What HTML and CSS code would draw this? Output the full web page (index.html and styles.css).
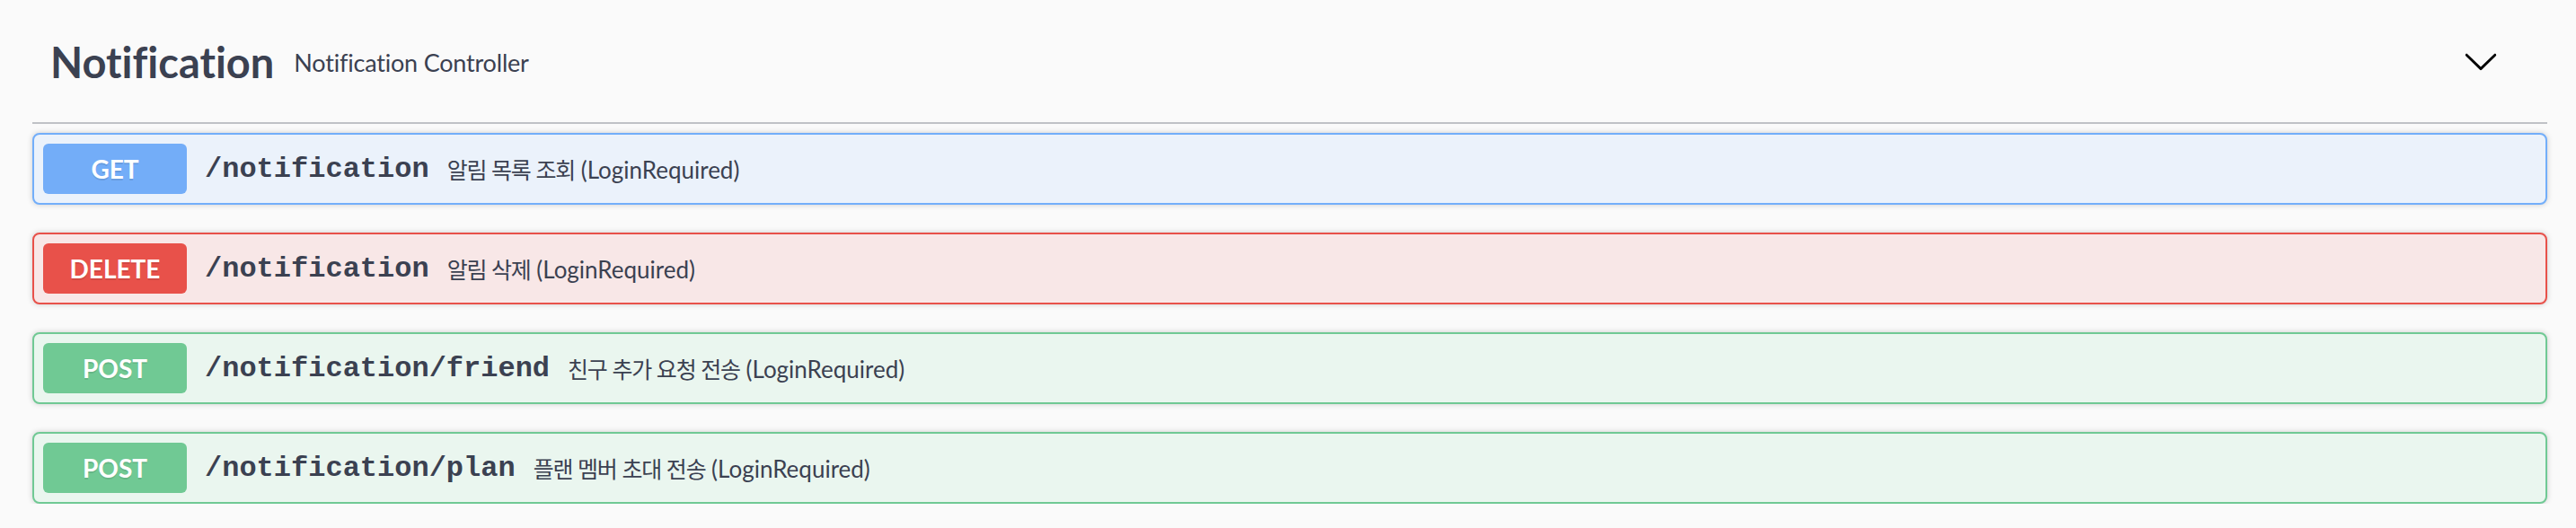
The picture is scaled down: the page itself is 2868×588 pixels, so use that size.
FILE: index.html
```html
<!DOCTYPE html>
<html lang="ko">
<head>
<meta charset="utf-8">
<title>Notification</title>
<link rel="stylesheet" href="styles.css">
</head>
<body>
<div class="wrapper">
  <section class="tag-section">
    <h3 class="opblock-tag">
      <span class="tag-name">Notification</span>
      <small class="tag-desc">Notification Controller</small>
      <button class="expand" aria-label="collapse">
        <svg class="arrow" width="40" height="40" viewBox="0 0 20 20"><path d="M17.418 6.109c.272-.268.709-.268.979 0s.271.701 0 .969l-7.908 7.83c-.27.268-.707.268-.979 0l-7.908-7.83c-.27-.268-.27-.701 0-.969.271-.268.709-.268.979 0L10 13.25l7.418-7.141z"/></svg>
      </button>
    </h3>
    <div class="ops">
      <div class="opblock get">
        <span class="method">GET</span>
        <span class="path">/notification</span>
        <span class="desc"><span class="ko">알림 목록 조회</span> (LoginRequired)</span>
      </div>
      <div class="opblock delete">
        <span class="method">DELETE</span>
        <span class="path">/notification</span>
        <span class="desc"><span class="ko">알림 삭제</span> (LoginRequired)</span>
      </div>
      <div class="opblock post">
        <span class="method">POST</span>
        <span class="path">/notification/friend</span>
        <span class="desc"><span class="ko">친구 추가 요청 전송</span> (LoginRequired)</span>
      </div>
      <div class="opblock post">
        <span class="method">POST</span>
        <span class="path">/notification/plan</span>
        <span class="desc"><span class="ko">플랜 멤버 초대 전송</span> (LoginRequired)</span>
      </div>
    </div>
  </section>
</div>
</body>
</html>
```

FILE: styles.css
```css
html, body {
  margin: 0;
  padding: 0;
  background: #fafafa;
}

body {
  font-family: Lato, "Noto Sans CJK KR", sans-serif;
  font-variant-ligatures: none;
  color: #3b4151;
}

.wrapper {
  padding: 0 32px 0 36px;
}

.opblock-tag {
  display: flex;
  align-items: center;
  margin: 0 0 10px;
  padding: 20px 40px 20px 20px;
  min-height: 96px;
  border-bottom: 2px solid rgba(59, 65, 81, 0.3);
}

.tag-name {
  font-size: 47px;
  font-weight: 700;
  line-height: 1.2;
  color: #3b4151;
  padding-top: 2px;
}

.tag-desc {
  flex: 1;
  padding: 4px 22px 0;
  font-size: 27px;
  letter-spacing: -0.2px;
  font-weight: 400;
  color: #3b4151;
  line-height: 1.2;
}

.expand {
  display: flex;
  align-items: center;
  border: none;
  background: none;
  padding: 0 14px;
  margin: 0;
}

.arrow {
  display: block;
  fill: #000;
}

.ops {
  display: flex;
  flex-direction: column;
  gap: 31px;
}

.opblock {
  display: flex;
  align-items: center;
  padding: 10px;
  border: 2px solid;
  border-radius: 8px;
  box-shadow: 0 0 6px rgba(0, 0, 0, 0.19);
}

.method {
  flex: none;
  width: 160px;
  height: 56px;
  display: flex;
  align-items: center;
  justify-content: center;
  border-radius: 6px;
  color: #fff;
  font-size: 28px;
  font-weight: 700;
  text-shadow: 0 2px 0 rgba(0, 0, 0, 0.1);
}

.path {
  padding: 0 20px;
  font-family: "Liberation Mono", monospace;
  font-weight: 700;
  font-size: 32px;
  color: #3b4151;
}

.desc {
  font-size: 26px;
  color: #3b4151;
}

.ko {
  font-family: "Noto Sans CJK KR", sans-serif;
  font-size: 25px;
  letter-spacing: -1.2px;
}

.get {
  background: #ebf2fb;
  border-color: #72aefa;
}
.get .method { background: #73adf8; }

.delete {
  background: #f8e7e7;
  border-color: #e8514a;
}
.delete .method { background: #e8514a; }

.post {
  background: #eaf6ef;
  border-color: #70c994;
}
.post .method { background: #70c994; }
```
